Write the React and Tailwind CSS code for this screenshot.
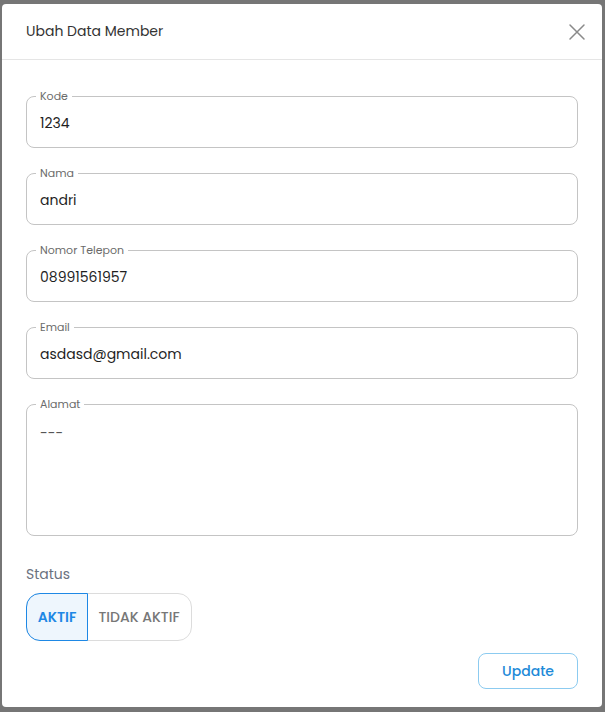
import { useState } from "react";

const fields = [
  { label: "Kode", value: "1234" },
  { label: "Nama", value: "andri" },
  { label: "Nomor Telepon", value: "08991561957" },
  { label: "Email", value: "asdasd@gmail.com" },
];

function Field({ label, value, multiline }) {
  return (
    <fieldset
      className={`border border-[#c4c4c4] rounded-[8px] px-[13px] ${multiline ? "h-[138px]" : "h-[58px]"}`}
    >
      <legend className="ml-[-4px] px-[4px] text-[11px] leading-[12px] text-[#6b6b6b]">{label}</legend>
      {multiline ? (
        <div className="pt-[13px] text-[14px] text-[#555]">{value}</div>
      ) : (
        <div className="pt-[11px] text-[14px] text-[#1f1f1f]">{value}</div>
      )}
    </fieldset>
  );
}

export default function App() {
  const [status, setStatus] = useState("aktif");

  return (
    <div className="w-[605px] h-[712px] bg-[#767676] pt-[4px] pl-[2px] font-['Poppins','Inter',sans-serif]">
      <div className="w-[600px] h-[703px] bg-white rounded-[4px] flex flex-col">
        <div className="h-[56px] flex items-center justify-between pl-[24px] pr-[15px] border-b border-[#e5e5e5]">
          <h2 className="text-[14px] text-[#333]">Ubah Data Member</h2>
          <button className="text-[#8a8a8a]">
            <svg width="20" height="20" viewBox="0 0 20 20" fill="none" stroke="currentColor" strokeWidth="1.5" strokeLinecap="round">
              <path d="M3 3l14 14M17 3L3 17" />
            </svg>
          </button>
        </div>

        <div className="flex flex-col px-[24px] pt-[30px] gap-[19px]">
          {fields.map((f) => (
            <Field key={f.label} label={f.label} value={f.value} />
          ))}
          <Field label="Alamat" value="---" multiline />
        </div>

        <div className="px-[24px] pt-[28px]">
          <div className="text-[14px] text-[#6b7280]">Status</div>
          <div className="mt-[8px] inline-flex h-[48px] rounded-[14px] border border-[#dcdcdc]">
            <button
              onClick={() => setStatus("aktif")}
              className={`w-[62px] -m-px rounded-l-[14px] border text-[14px] font-semibold ${
                status === "aktif" ? "border-[#1e88e5] bg-[#eef6fd] text-[#1e88e5]" : "border-transparent text-[#777]"
              }`}
            >
              AKTIF
            </button>
            <button
              onClick={() => setStatus("tidak")}
              className={`w-[104px] text-[14px] font-medium ${
                status === "tidak" ? "bg-[#eef6fd] text-[#1e88e5]" : "text-[#777]"
              }`}
            >
              TIDAK AKTIF
            </button>
          </div>
        </div>

        <div className="flex justify-end px-[24px] mt-[12px]">
          <button className="w-[100px] h-[36px] rounded-[8px] border border-[#8ccbf0] text-[14px] font-medium text-[#1e8ad8]">
            Update
          </button>
        </div>
      </div>
    </div>
  );
}
